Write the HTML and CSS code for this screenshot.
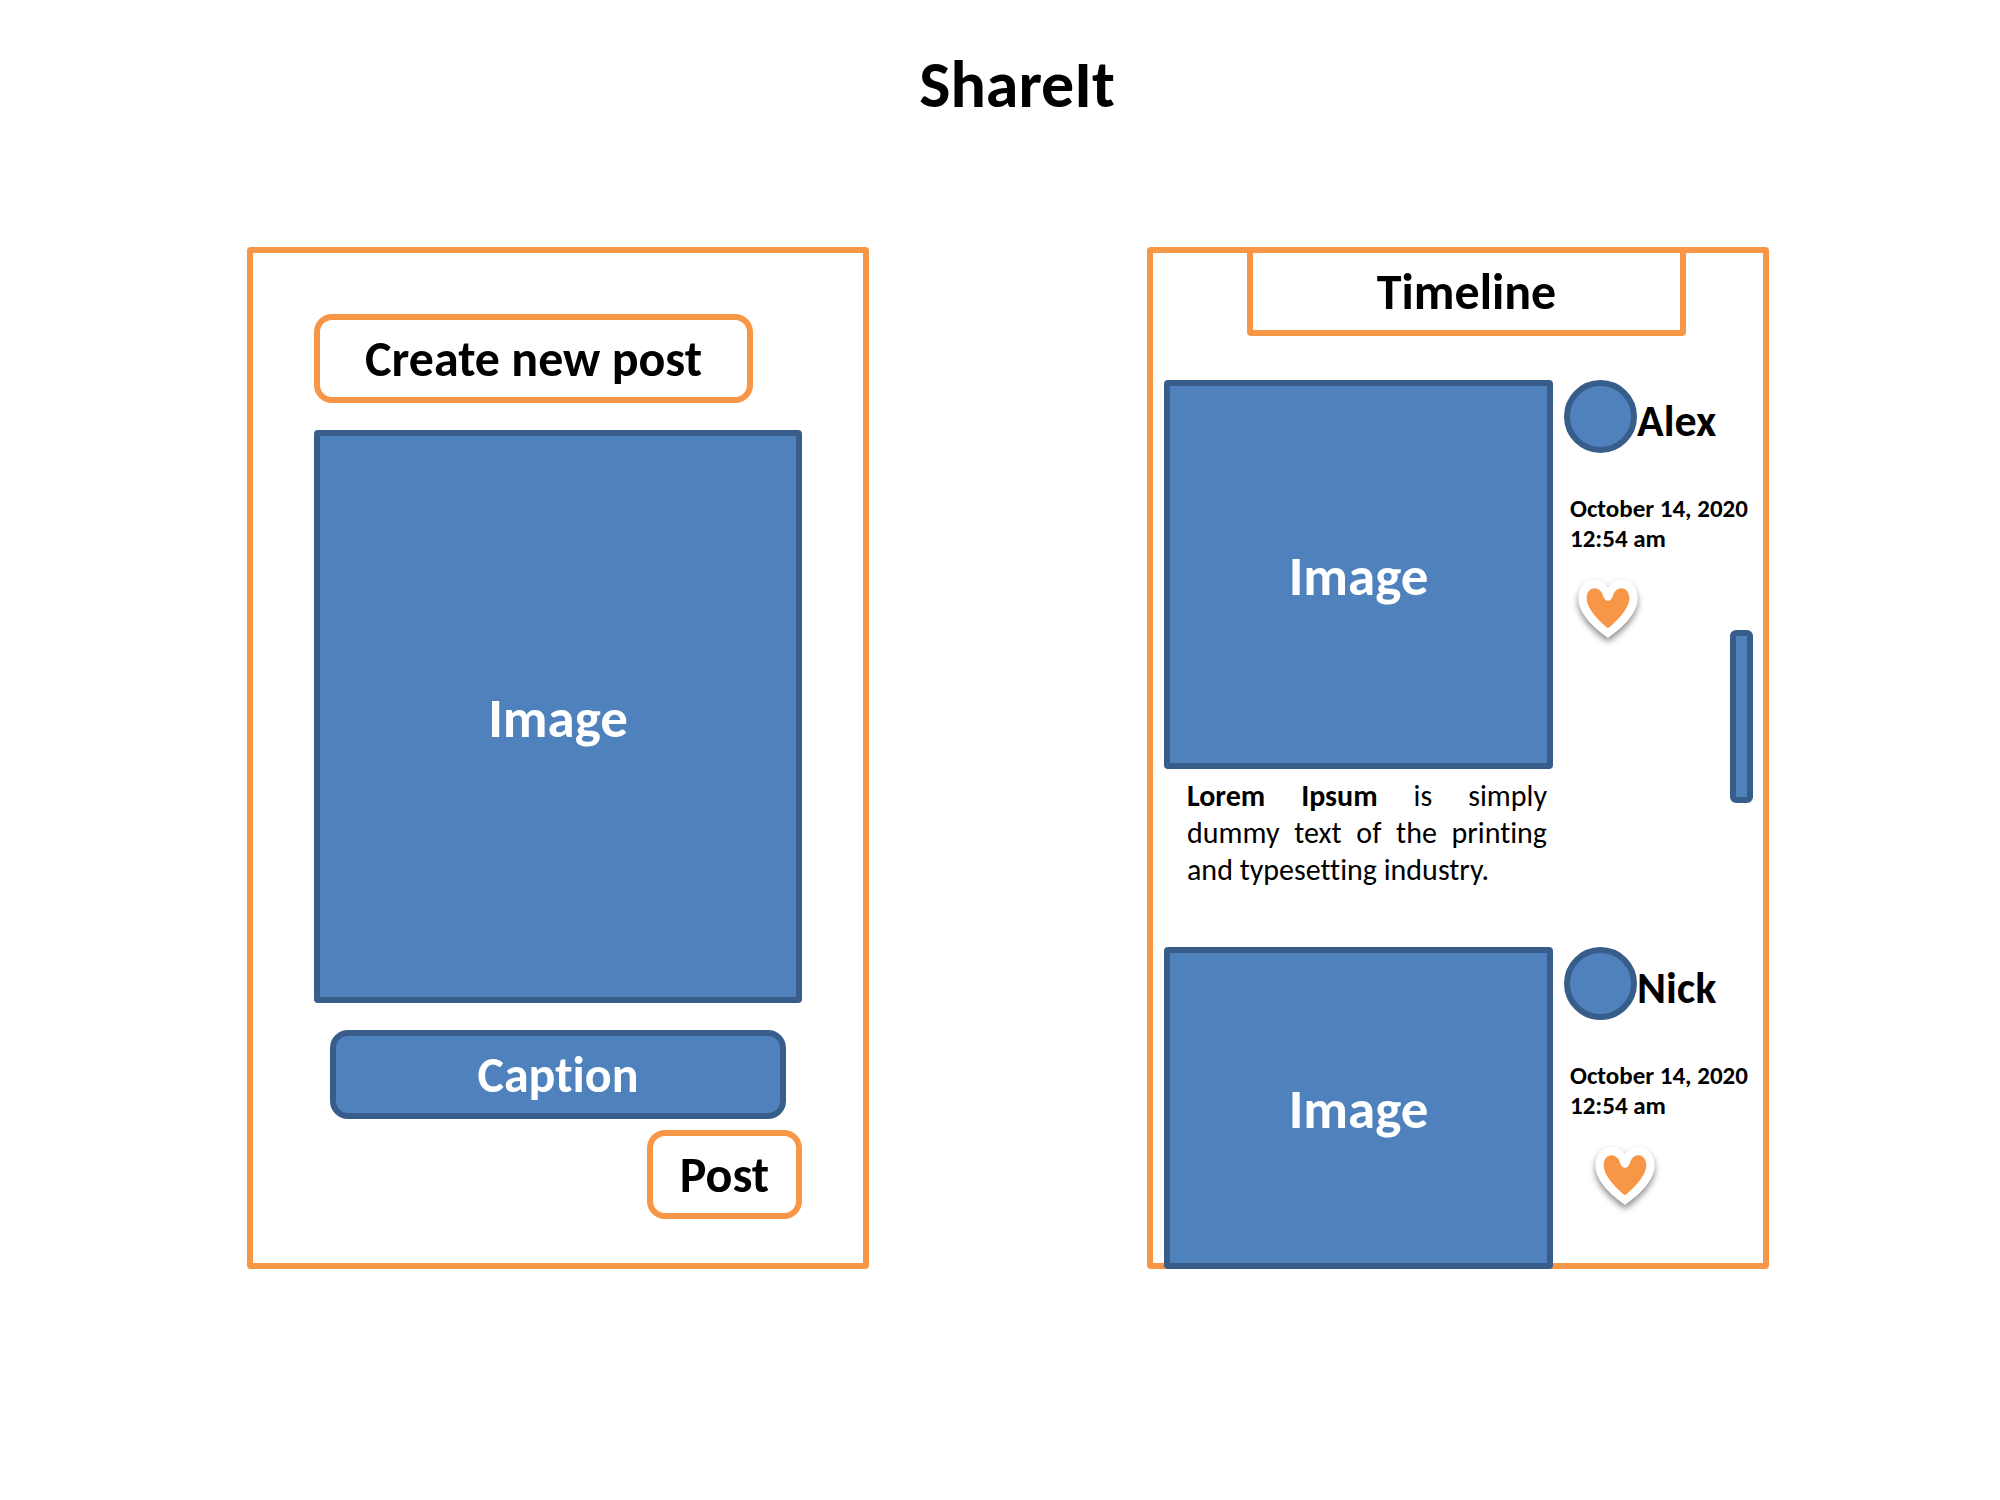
FILE: index.html
```html
<!DOCTYPE html>
<html lang="en">
<head>
<meta charset="utf-8">
<meta name="viewport" content="width=device-width, initial-scale=1">
<title>ShareIt</title>
<link rel="stylesheet" href="styles.css">
</head>
<body>
<header class="site-header">
  <h1 class="site-title">ShareIt</h1>
</header>
<main class="screens">
  <form class="screen composer">
    <button class="box box-outline create" type="button">Create new post</button>
    <div class="box box-solid picture composer-picture">Image</div>
    <input class="box box-solid caption-field" type="text" placeholder="Caption" aria-label="Caption">
    <button class="box box-outline submit" type="button">Post</button>
  </form>

  <section class="screen timeline">
    <h2 class="timeline-title">Timeline</h2>
    <div class="feed">
      <article class="post">
        <div class="post-main">
          <div class="box box-solid picture post-picture">Image</div>
          <p class="post-text"><b>Lorem Ipsum</b> is simply dummy text of the printing and typesetting industry.</p>
        </div>
        <div class="post-side">
          <div class="author"><span class="avatar"></span><h3 class="author-name">Alex</h3></div>
          <p class="date">October 14, 2020<br>12:54 am</p>
          <button class="like" type="button" aria-label="Like">
            <svg class="heart" viewBox="0 0 240 240" aria-hidden="true">
              <path class="heart-rim" d="M120 207C100 192 31 145 31 88C31 55 52 32 80 32C98 32 112 42 120 55C128 42 142 32 160 32C188 32 209 55 209 88C209 145 140 192 120 207Z"/>
              <path class="heart-core" d="M120 178C100 162 56 122 56 88C56 70 66 58 80 58C94 58 102 70 105 80Q110 95 120 95Q130 95 135 80C138 70 146 58 160 58C174 58 184 70 184 88C184 122 140 162 120 178Z"/>
            </svg>
          </button>
        </div>
      </article>
      <article class="post post-last">
        <div class="post-main">
          <div class="box box-solid picture post-picture">Image</div>
        </div>
        <div class="post-side">
          <div class="author"><span class="avatar"></span><h3 class="author-name">Nick</h3></div>
          <p class="date">October 14, 2020<br>12:54 am</p>
          <button class="like" type="button" aria-label="Like">
            <svg class="heart" viewBox="0 0 240 240" aria-hidden="true">
              <path class="heart-rim" d="M120 207C100 192 31 145 31 88C31 55 52 32 80 32C98 32 112 42 120 55C128 42 142 32 160 32C188 32 209 55 209 88C209 145 140 192 120 207Z"/>
              <path class="heart-core" d="M120 178C100 162 56 122 56 88C56 70 66 58 80 58C94 58 102 70 105 80Q110 95 120 95Q130 95 135 80C138 70 146 58 160 58C174 58 184 70 184 88C184 122 140 162 120 178Z"/>
            </svg>
          </button>
        </div>
      </article>
    </div>
    <div class="scroll-thumb"></div>
  </section>
</main>
</body>
</html>
```
FILE: styles.css
```css
:root {
  --orange: #f79646;
  --blue: #4f81bd;
  --navy: #385d8a;
}

* {
  box-sizing: border-box;
}

body {
  margin: 0;
  background: #fff;
  color: #000;
  font-family: Carlito, Lato, sans-serif;
  font-variant-ligatures: none;
}

h1, h2, h3, p {
  margin: 0;
}

.site-header {
  padding: 47px 0 0 34px;
  text-align: center;
}

.site-title {
  font-size: 66px;
  line-height: 76px;
}

.screens {
  display: grid;
  grid-template-columns: repeat(2, minmax(0, 1fr));
  gap: 278px;
  padding: 124px 231px 0 247px;
}

.screen {
  border: 6px solid var(--orange);
  border-radius: 4px;
}

.box {
  border: 6px solid;
  border-radius: 18px;
  font-family: inherit;
  font-size: 50px;
  font-variant-ligatures: none;
  font-weight: 700;
  line-height: 56px;
  text-align: center;
}

.box-outline {
  border-color: var(--orange);
  background: #fff;
  color: #000;
}

.box-solid {
  border-color: var(--navy);
  background: var(--blue);
  color: #fff;
}

.picture {
  display: flex;
  align-items: center;
  justify-content: center;
  padding-top: 4px;
  border-radius: 4px;
  font-size: 55px;
}

.composer {
  display: flex;
  flex-direction: column;
  padding: 61px 61px 44px;
}

.create {
  width: 90%;
  height: 89px;
  padding: 0;
}

.composer-picture {
  aspect-ratio: 488 / 573;
  margin-top: 27px;
}

.caption-field {
  height: 89px;
  margin: 27px 16px 0;
  padding: 0;
}

.caption-field::placeholder {
  color: #fff;
  opacity: 1;
}

.submit {
  align-self: flex-end;
  width: 155px;
  height: 89px;
  margin-top: 11px;
  padding: 0;
}

.timeline {
  display: flex;
  flex-direction: column;
  position: relative;
  padding-left: 11px;
}

.timeline-title {
  width: 439px;
  margin: -6px 0 44px 83px;
  border: 6px solid var(--orange);
  border-radius: 4px;
  font-size: 50px;
  line-height: 77px;
  text-align: center;
}

.feed {
  display: flex;
  flex: 1;
  flex-direction: column;
  gap: 45px;
  margin-bottom: -6px;
}

.post {
  display: grid;
  grid-template-columns: 389px minmax(0, 1fr);
  gap: 11px;
}

.post-last {
  flex: 1;
}

.post-main {
  display: flex;
  flex-direction: column;
}

.post-picture {
  flex: 1;
  min-height: 320px;
}

.post:first-child .post-picture {
  flex: none;
  height: 389px;
}

.post-text {
  padding: 8px 6px 14px 23px;
  font-size: 30px;
  line-height: 37px;
  text-align: justify;
}

.author {
  display: flex;
  align-items: center;
}

.avatar {
  width: 73px;
  height: 73px;
  border: 6px solid var(--navy);
  border-radius: 50%;
  background: var(--blue);
}

.author-name {
  padding-top: 8px;
  font-size: 44px;
  line-height: 48px;
}

.date {
  padding: 41px 0 0 6px;
  font-size: 25px;
  font-weight: 700;
  line-height: 30px;
}

.like {
  display: block;
  margin: 15px 0 0 4px;
  padding: 0;
  border: 0;
  background: none;
}

.post-last .like {
  margin-left: 21px;
}

.heart {
  display: block;
  width: 80px;
  height: 80px;
}

.heart-rim {
  fill: #fff;
  filter: drop-shadow(0 12px 9px rgba(0, 0, 0, 0.45));
}

.heart-core {
  fill: var(--orange);
}

.scroll-thumb {
  position: absolute;
  top: 377px;
  right: 10px;
  width: 23px;
  height: 173px;
  border: 6px solid var(--navy);
  border-radius: 6px;
  background: var(--blue);
}
```
